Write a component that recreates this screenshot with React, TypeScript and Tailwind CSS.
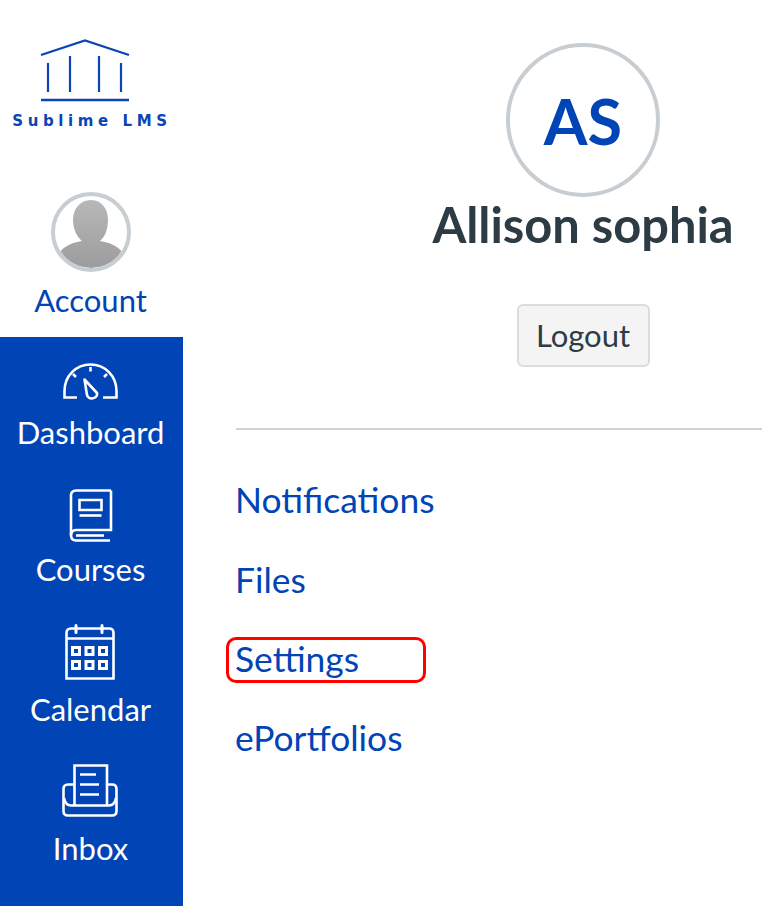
import React from 'react';

const blue = 'text-[#0044b6]';

const LogoMark = () => (
  <svg width="90" height="64" viewBox="0 0 90 64" fill="none" stroke="#0b45b5" className="block">
    <path d="M1 17 L45 2.500 L89 17" strokeWidth="2.200" />
    <path d="M8 25 V54 M30 18 V54 M59 18 V54 M81 25 V54" strokeWidth="2.200" />
    <path d="M1 62 H89" strokeWidth="2.500" />
  </svg>
);

const DashboardIcon = () => (
  <svg width="56" height="38" viewBox="0 0 56 38" fill="none" stroke="white" strokeWidth="2.600" className="block">
    <path d="M15 35.500 H2.500 V29 C2.500 14 14 2.500 28.500 2.500 C43 2.500 54.500 14 54.500 29 V35.500 H41" />
    <path d="M28.500 5 V9.500 M11 12 L14 15 M45 12 L42 15" />
    <path d="M22.500 17.500 L35 31 C36 37 26 38.500 25 33 Z" strokeLinejoin="round" />
  </svg>
);

const CoursesIcon = () => (
  <svg width="44" height="53" viewBox="0 0 44 53" fill="none" stroke="white" strokeWidth="2.600" className="block">
    <path d="M42 1.500 H7 C3.500 1.500 2 4 2 6 V46 C2 49.500 4 51.500 7 51.500 H41" />
    <path d="M42 1.500 V41 H7 C4 41 2 43 2 46" />
    <path d="M7 46.500 H35" />
    <path d="M10.500 11 H32.500 V21 H10.500 Z" />
    <path d="M10.500 26.500 H32.500" />
  </svg>
);

const CalendarIcon = () => (
  <svg width="50" height="56" viewBox="0 0 50 56" fill="none" stroke="white" strokeWidth="2.600" className="block">
    <path d="M6 4.500 H44 C47 4.500 48.500 6 48.500 9 V54.500 H1.500 V9 C1.500 6 3 4.500 6 4.500 Z" />
    <path d="M1.500 14.500 H48.500" />
    <path d="M11 1.500 V8.500 M37 1.500 V8.500" strokeWidth="3" strokeLinecap="round" />
    {[6, 19.5, 33].map((x) =>
      [22, 36].map((y) => (
        <rect key={`${x}-${y}`} x={x + 1.5} y={y + 1.5} width="7" height="7" strokeWidth="3" />
      ))
    )}
  </svg>
);

const InboxIcon = () => (
  <svg width="56" height="53" viewBox="0 0 56 53" fill="none" stroke="white" strokeWidth="2.600" className="block">
    <path d="M12.500 41 V1.500 H45 V41" />
    <path d="M18 10.500 H34 M18 20.500 H37 M18 30.500 H37" />
    <path d="M12 20.500 H6 C3 20.500 1.500 22 1.500 25 V47 C1.500 50 3 51.500 6 51.500 H50 C53 51.500 54.500 50 54.500 47 V25 C54.500 22 53 20.500 50 20.500 H45" />
    <path d="M2 34 C3 39 6 41.500 9 41.500 H47 C50 41.500 53 39 54 34" />
  </svg>
);

const navItems = [
  { label: 'Dashboard', icon: <DashboardIcon />, box: 'mt-[25px] mr-[2px]', labelBox: 'mt-[14px]' },
  { label: 'Courses', icon: <CoursesIcon />, box: 'mt-[39px] ml-[2px]', labelBox: 'mt-[9px]' },
  { label: 'Calendar', icon: <CalendarIcon />, box: 'mt-[37px] mr-[2px]', labelBox: 'mt-[11px]' },
  { label: 'Inbox', icon: <InboxIcon />, box: 'mt-[37px] mr-[2px]', labelBox: 'mt-[13px]' },
];

const links = ['Notifications', 'Files', 'Settings', 'ePortfolios'];

export default function App() {
  return (
    <div className="flex h-[906px] w-[762px] overflow-hidden bg-white font-['Lato','Noto_Sans',sans-serif]">
      <aside className="flex w-[183px] shrink-0 flex-col">
        <div className="flex h-[337px] flex-col items-center bg-white pr-[2px]">
          <div className="mt-[38px] self-start pl-[40px]">
            <LogoMark />
          </div>
          <div className="mt-[10px] ml-[3px] whitespace-nowrap font-['DejaVu_Sans',sans-serif] text-[15px] leading-[18px] font-bold tracking-[4.6px] text-[#0b45b5]">
            Sublime LMS
          </div>
          <div className="mt-[62px] h-[80px] w-[80px] overflow-hidden rounded-full border-[4px] border-[#c7cdd1] bg-white">
            <svg width="72" height="72" viewBox="0 0 72 72" className="block">
              <defs>
                <linearGradient id="person" x1="0" y1="0" x2="0" y2="1">
                  <stop offset="0" stopColor="#b8b8b8" />
                  <stop offset="1" stopColor="#9c9c9c" />
                </linearGradient>
              </defs>
              <path
                d="M36 4 C25 4 18 13 18 24 C18 33 22 41 27 45 C20 46 10 49 5 56 C13 67 24 72 36 72 C48 72 59 67 67 56 C62 49 52 46 45 45 C50 41 53 33 53 24 C53 13 47 4 36 4 Z"
                fill="url(#person)"
              />
            </svg>
          </div>
          <div className={`mt-[10px] text-[31px] leading-[36px] ${blue}`}>Account</div>
        </div>
        <nav className="flex flex-1 flex-col items-center bg-[#0044b6] pr-[2px] text-white">
          {navItems.map((item) => (
            <div key={item.label} className="flex flex-col items-center">
              <div className={item.box}>{item.icon}</div>
              <div className={`text-[31px] leading-[36px] ${item.labelBox}`}>{item.label}</div>
            </div>
          ))}
        </nav>
      </aside>

      <main className="ml-[53px] w-[694px] shrink-0">
        <div className="flex flex-col items-center pt-[43px]">
          <div className="flex h-[154px] w-[154px] items-center justify-center rounded-full border-[4px] border-[#c7cdd1] bg-white">
            <span className={`text-[63px] leading-none font-bold ${blue}`}>AS</span>
          </div>
          <h1 className="mt-[-1px] text-[48.8px] leading-[56px] font-bold text-[#2d3b45]">Allison sophia</h1>
          <button className="mt-[52px] h-[63px] w-[133px] rounded-[6px] border-2 border-[#dcdcdc] bg-[#f4f4f4] text-[31px] text-[#2d3b45]">
            Logout
          </button>
        </div>
        <hr className="mt-[61px] border-t-2 border-[#d0d2d4]" />
        <ul className={`mt-[50px] -ml-[1px] text-[35.4px] leading-[40px] ${blue}`}>
          {links.map((link) => (
            <li key={link} className="relative mb-[39px] first:mb-[40px]">
              {link}
              {link === 'Settings' && (
                <span className="absolute top-[-2px] left-[-9px] h-[46px] w-[200px] rounded-[10px] border-[3px] border-[#ff0000]" />
              )}
            </li>
          ))}
        </ul>
      </main>
    </div>
  );
}
